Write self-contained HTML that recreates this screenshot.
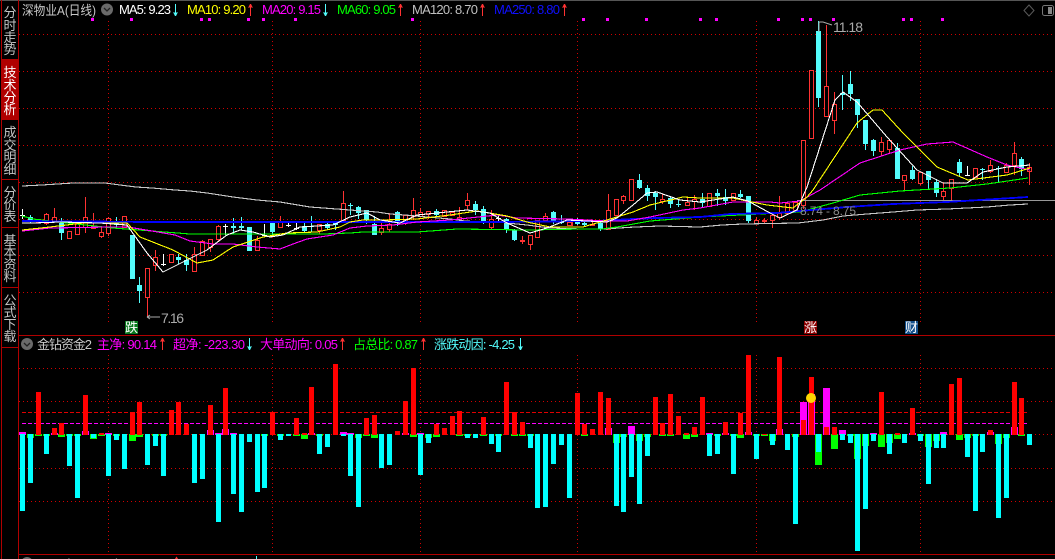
<!DOCTYPE html>
<html lang="zh">
<head>
<meta charset="utf-8">
<title>深物业A(日线)</title>
<style>
html,body{margin:0;padding:0;background:#000;width:1055px;height:559px;overflow:hidden}
svg{display:block}
text{font-family:"Liberation Sans","WenQuanYi Zen Hei","Noto Sans CJK SC",sans-serif;font-size:13px}
.s{font-size:13px;text-anchor:middle;fill:#c4c4c4}
.g{stroke:#d00000;stroke-width:1;stroke-dasharray:1 3;fill:none}
.l{fill:none;stroke-width:1.100;stroke-linejoin:round}
</style>
</head>
<body>
<svg width="1055" height="559" viewBox="0 0 1055 559" xmlns="http://www.w3.org/2000/svg">
<rect width="1055" height="559" fill="#000"/>
<rect width="1055" height="1" fill="#555"/>

<!-- grid -->
<g shape-rendering="crispEdges">
<path class="g" d="M19 34.5H1055M19 71.5H1055M19 108.5H1055M19 145.5H1055M19 182.5H1055M19 219.5H1055M19 255.5H1055M19 292.5H1055"/>
<path class="g" d="M108.5 21V322M272.500 21V322M420.500 21V322M577.500 21V322M756.500 21V322M920.500 21V322"/>
<path class="g" d="M19 368.500H1055M19 401.500H1055M19 434.500H1055M19 468.500H1055M19 501.500H1055"/>
<path class="g" d="M108.500 355V552M272.500 355V552M420.500 355V552M577.500 355V552M756.500 355V552M920.500 355V552"/>
<path fill="none" stroke="#e00000" stroke-dasharray="4 2" d="M22 412.500H1027"/>
<path fill="none" stroke="#f0f" stroke-dasharray="4 2" d="M22 423.500H1027"/>

<!-- frame -->
<path fill="none" stroke="#b00000" d="M1.500 0V559M18.500 0V559M2 59.500H18M2 179.500H18M2 227.500H18M2 287.500H18M2 347.500H18M18 335.500H1055M18 554.500H1055"/>
<rect x="2" y="60" width="16" height="60" fill="#b00000"/>

<!-- top signal squares -->
<path fill="#f0f" d="M91 18h3v3h-3zM130 18h3v3h-3zM200 18h3v3h-3zM208 18h3v3h-3zM247 18h3v3h-3zM262 18h3v3h-3zM294 18h3v3h-3zM411 18h3v3h-3zM582 18h3v3h-3zM606 18h3v3h-3zM645 18h3v3h-3zM699 18h3v3h-3zM715 18h3v3h-3zM777 18h3v3h-3zM801 18h3v3h-3zM809 18h3v3h-3zM832 18h3v3h-3zM902 18h3v3h-3zM910 18h3v3h-3zM941 18h3v3h-3z"/>

<!-- candle wicks -->
<path fill="none" stroke="#ff3232" d="M54.500 208V222M46.500 213V225M85.500 197V233M93.500 213V229M101.500 227V238M108.500 217V236M147.500 268V317M155.500 250V271M194.500 247V271M202.500 240V256M210.500 239V252M218.500 225V242M257.500 236V251M280.500 216V228M319.500 224V234M343.500 191V223M381.500 222V235M389.500 213V232M405.500 215V225M413.500 198V220M420.500 208V217M428.500 211V219M444.500 210V217M459.500 207V219M467.500 193V210M491.500 210V229M522.500 236V244M530.500 235V250M545.500 213V222M572.500 220V226M592.500 222V225M608.500 194V229M623.500 195V204M662.500 194V204M687.500 198V205M694.500 195V210M756.500 217V223M764.500 218V223M772.500 213V228M779.500 196V220M803.500 140V209M826.500 25V116M834.500 92V134M881.500 137V156M889.500 140V154M904.500 175V190M920.500 172V185M943.500 183V200M951.500 179V200M990.500 160V173M1006.500 163V173M1014.500 142V175M1029.500 163V185"/>
<path fill="none" stroke="#54fcfc" d="M30.500 215V223M61.500 218V240M116.500 217V227M139.500 277V303M178.500 254V264M186.500 254V271M233.500 218V234M241.500 217V230M272.500 223V236M304.500 221V232M311.500 216V232M327.500 222V230M335.500 222V230M350.500 203V215M358.500 206V219M366.500 210V224M374.500 216V235M397.500 211V226M436.500 209V217M475.500 201V215M483.500 206V224M506.500 218V233M514.500 229V241M553.500 211V224M561.500 215V224M577.500 218V225M584.500 221V226M600.500 221V231M639.500 174V189M647.500 185V201M655.500 191V210M670.500 196V208M678.500 200V207M702.500 193V207M717.500 189V206M725.500 189V205M740.500 190V198M748.500 196V223M818.500 21V107M842.500 75V110M850.500 71V101M857.500 99V128M865.500 120V150M873.500 139V156M897.500 143V179M912.500 166V180M928.500 171V189M936.500 179V197M959.500 159V176M982.500 168V180M998.500 166V182M1021.500 157V176"/>
<path fill="none" stroke="#fff" d="M22.500 209V219M20 215.500h5M163.500 254V266M161 264.500h5M225.500 224V235M223 226.500h5M264.500 224V236M262 235.500h5M288.500 222V227M286 225.500h5M296.500 223V230M294 228.500h5M498.500 215V221M496 218.500h5M967.500 166V176M965 175.500h5"/>

<!-- red hollow bodies -->
<path fill="#000" stroke="#ff3232" d="M36.500 219.500h4v3h-4zM44.500 214.500h4v9h-4zM52.500 217.500h4v4h-4zM67.500 231.500h4v7h-4zM75.500 223.500h4v11h-4zM83.500 217.500h4v10h-4zM91.500 226.500h4v2h-4zM99.500 232.500h4v4h-4zM106.500 218.500h4v15h-4zM122.500 216.500h4v11h-4zM145.500 268.500h4v29h-4zM153.500 257.500h4v8h-4zM169.500 254.500h4v8h-4zM192.500 254.500h4v17h-4zM200.500 241.500h4v14h-4zM208.500 239.500h4v8h-4zM216.500 226.500h4v13h-4zM255.500 240.500h4v10h-4zM278.500 222.500h4v5h-4zM317.500 224.500h4v6h-4zM341.500 203.500h4v17h-4zM379.500 228.500h4v4h-4zM387.500 224.500h4v5h-4zM403.500 215.500h4v6h-4zM411.500 210.500h4v6h-4zM418.500 212.500h4v4h-4zM426.500 211.500h4v3h-4zM442.500 210.500h4v6h-4zM450.500 212.500h4v3h-4zM457.500 217.500h4v2h-4zM465.500 200.500h4v5h-4zM489.500 219.500h4v8h-4zM520.500 240.500h4v1h-4zM528.500 235.500h4v9h-4zM535.500 220.500h4v17h-4zM543.500 216.500h4v4h-4zM567.500 222.500h4v3h-4zM590.500 224.500h4v1h-4zM606.500 210.500h4v19h-4zM614.500 199.500h4v16h-4zM621.500 196.500h4v4h-4zM629.500 179.500h4v21h-4zM660.500 199.500h4v2h-4zM685.500 202.500h4v3h-4zM692.500 199.500h4v2h-4zM707.500 193.500h4v13h-4zM731.500 193.500h4v7h-4zM754.500 220.500h4v3h-4zM762.500 220.500h4v1h-4zM770.500 215.500h4v5h-4zM777.500 213.500h4v4h-4zM785.500 203.500h4v10h-4zM793.500 202.500h4v8h-4zM801.500 140.500h4v65h-4zM809.500 70.500h4v68h-4zM824.500 86.500h4v30h-4zM832.500 104.500h4v16h-4zM879.500 142.500h4v9h-4zM887.500 140.500h4v9h-4zM902.500 175.500h4v5h-4zM918.500 172.500h4v11h-4zM941.500 191.500h4v5h-4zM949.500 179.500h4v9h-4zM973.500 168.500h4v9h-4zM988.500 165.500h4v6h-4zM1004.500 165.500h4v7h-4zM1012.500 153.500h4v12h-4zM1027.500 167.500h4v4h-4z"/>

<!-- cyan bodies -->
<path fill="#54fcfc" d="M28 217h5v4h-5zM59 223h5v10h-5zM114 222h5v3h-5zM130 235h5v44h-5zM137 285h5v6h-5zM176 257h5v3h-5zM184 260h5v5h-5zM231 226h5v2h-5zM239 226h5v2h-5zM247 227h5v24h-5zM270 223h5v9h-5zM302 226h5v5h-5zM309 226h5v1h-5zM325 224h5v4h-5zM333 223h5v2h-5zM348 205h5v1h-5zM356 207h5v6h-5zM364 210h5v10h-5zM372 224h5v11h-5zM395 212h5v9h-5zM434 211h5v4h-5zM473 204h5v6h-5zM481 209h5v13h-5zM504 219h5v10h-5zM512 230h5v10h-5zM551 212h5v9h-5zM559 222h5v1h-5zM575 221h5v3h-5zM582 223h5v2h-5zM598 223h5v6h-5zM637 180h5v8h-5zM645 188h5v8h-5zM653 193h5v4h-5zM668 198h5v6h-5zM676 204h5v1h-5zM700 199h5v4h-5zM715 193h5v3h-5zM723 197h5v4h-5zM738 194h5v3h-5zM746 196h5v25h-5zM816 31h5v67h-5zM840 93h5v2h-5zM848 84h5v10h-5zM855 99h5v16h-5zM863 120h5v24h-5zM871 140h5v11h-5zM895 148h5v31h-5zM910 170h5v9h-5zM926 171h5v9h-5zM934 182h5v11h-5zM957 162h5v11h-5zM980 169h5v1h-5zM996 168h5v1h-5zM1019 159h5v10h-5z"/>

<!-- cost line -->
<path stroke="#999" d="M797 200.500H1055"/>
</g>

<!-- moving averages -->
<g shape-rendering="crispEdges">
<polyline class="l" stroke="#c8c8c8" points="22,186 42,185 73,183 105,183 120,185 136,187 152,188 175,190 190,191 207,193 233,197 257,200 280,202 310,207 350,210 377,212 390,214 405,215 427,217 450,219 465,221 482,222 497,222 527,225 550,228 583,229 603,229 635,227 660,226 700,227 722,225 743,224 798,223 823,220 843,216 867,214 893,212 917,210 947,209 987,207 1010,205 1028,204"/>
<polyline class="l" stroke="#00ff00" points="22,216 33,219 67,223 113,228 152,231 190,234 227,234 270,234 323,234 350,233 363,232 417,232 457,229 527,230 583,229 602,229 617,227 650,221 700,217 720,216 780,213 800,212 833,203 860,195 900,191 950,188 987,184 1028,178"/>
<polyline class="l" stroke="#0000ff" style="stroke-width:1.800" points="22,221 152,222 350,222 500,222 597,221 633,219 657,218 700,217 730,214 777,213 800,211 847,207 893,204 947,202 980,200 1028,197"/>
<polyline class="l" stroke="#ff00ff" points="22,231 50,228 110,227 128,227 140,229 152,231 175,235 190,241 213,244 233,244 257,247 280,249 293,244 307,239 333,235 350,228 367,226 393,225 417,222 450,220 497,215 517,218 567,219 607,221 627,221 650,217 683,210 700,208 733,202 770,202 780,203 800,201 820,190 860,163 900,150 927,144 953,142 987,157 1007,165 1030,170"/>
<polyline class="l" stroke="#ffff00" points="22,230 50,227 83,223 127,223 140,237 173,250 197,263 213,260 233,247 263,237 287,233 317,232 340,227 350,222 363,220 383,220 417,219 450,215 477,211 507,216 527,222 550,227 583,227 607,220 633,212 650,205 683,197 700,198 733,198 747,201 767,205 793,208 807,197 813,190 857,123 873,110 882,110 903,133 937,167 968,180 1007,175 1030,168"/>
<polyline class="l" stroke="#ffffff" points="22,223 33,223 60,222 100,223 127,225 147,253 163,272 187,260 207,250 227,235 240,230 253,232 270,237 283,235 300,227 333,225 350,217 367,213 380,220 400,223 417,215 447,212 467,210 490,213 507,223 530,233 547,228 567,220 607,222 617,218 633,205 647,193 657,192 680,200 700,202 733,197 748,201 770,213 780,218 797,210 807,187 835,100 843,92 857,102 887,137 917,170 943,183 967,183 983,172 1007,167 1030,165"/>
</g>

<!-- lower indicator bars -->
<g shape-rendering="crispEdges">
<path fill="#00ff00" d="M27 434v4h7v-4zM35 434v2h7v-2zM43 434v2h7v-2zM58 434v3h7v-3zM66 434v2h7v-2zM74 434v2h7v-2zM90 434v5h7v-5zM98 434v2h7v-2zM113 434v2h7v-2zM129 434v7h7v-7zM136 434v3h7v-3zM152 434v2h7v-2zM160 434v2h7v-2zM261 434v2h7v-2zM277 434v2h7v-2zM293 434v2h7v-2zM301 434v5h7v-5zM316 434v2h7v-2zM355 434v4h7v-4zM363 434v2h7v-2zM371 434v4h7v-4zM410 434v3h7v-3zM425 434v4h7v-4zM433 434v3h7v-3zM456 434v2h7v-2zM464 434v2h7v-2zM480 434v2h7v-2zM495 434v2h7v-2zM511 434v2h7v-2zM519 434v2h7v-2zM527 434v2h7v-2zM581 434v2h7v-2zM613 434v9h7v-9zM620 434v3h7v-3zM636 434v7h7v-7zM644 434v3h7v-3zM659 434v2h7v-2zM667 434v2h7v-2zM683 434v5h7v-5zM691 434v3h7v-3zM714 434v2h7v-2zM730 434v2h7v-2zM737 434v4h7v-4zM753 434v2h7v-2zM761 434v2h7v-2zM769 434v7h7v-7zM792 434v3h7v-3zM815 434v31h7v-31zM831 434v15h7v-15zM847 434v2h7v-2zM854 434v25h7v-25zM862 434v12h7v-12zM878 434v13h7v-13zM886 434v9h7v-9zM894 434v5h7v-5zM917 434v2h7v-2zM925 434v13h7v-13zM933 434v7h7v-7zM956 434v6h7v-6zM964 434v4h7v-4zM972 434v2h7v-2zM995 434v10h7v-10zM1003 434v4h7v-4zM1018 434v2h7v-2z"/>
<path fill="#ff00ff" d="M19 435v-3h7v3zM51 435v-2h7v2zM82 435v-4h7v4zM105 435v-2h7v2zM207 435v-5h7v5zM215 435v-2h7v2zM222 435v-6h7v6zM230 435v-2h7v2zM308 435v-2h7v2zM340 435v-3h7v3zM347 435v-2h7v2zM402 435v-2h7v2zM417 435v-2h7v2zM605 435v-7h7v7zM628 435v-9h7v9zM706 435v-2h7v2zM722 435v-2h7v2zM745 435v-3h7v3zM776 435v-6h7v6zM800 435v-33h7v33zM808 435v-41h7v41zM823 435v-47h7v47zM839 435v-5h7v5zM870 435v-2h7v2zM909 435v-2h7v2zM940 435v-3h7v3zM987 435v-3h7v3zM1011 435v-8h7v8z"/>
<path fill="#ff0000" d="M36 435v-43h5v43zM52 435v-7h5v7zM59 435v-12h5v12zM83 435v-40h5v40zM99 435v-2h5v2zM130 435v-23h5v23zM137 435v-33h5v33zM169 435v-25h5v25zM176 435v-33h5v33zM184 435v-11h5v11zM208 435v-30h5v30zM223 435v-47h5v47zM270 435v-23h5v23zM294 435v-17h5v17zM302 435v-2h5v2zM309 435v-48h5v48zM333 435v-71h5v71zM364 435v-17h5v17zM372 435v-20h5v20zM395 435v-4h5v4zM403 435v-34h5v34zM411 435v-67h5v67zM434 435v-11h5v11zM442 435v-7h5v7zM450 435v-19h5v19zM457 435v-24h5v24zM481 435v-18h5v18zM504 435v-53h5v53zM512 435v-23h5v23zM520 435v-13h5v13zM575 435v-42h5v42zM582 435v-11h5v11zM590 435v-6h5v6zM598 435v-43h5v43zM606 435v-37h5v37zM653 435v-38h5v38zM660 435v-12h5v12zM668 435v-41h5v41zM676 435v-19h5v19zM684 435v-2h5v2zM692 435v-8h5v8zM700 435v-38h5v38zM723 435v-13h5v13zM738 435v-22h5v22zM746 435v-80h5v80zM762 435v-1h5v1zM777 435v-78h5v78zM801 435v-15h5v15zM809 435v-58h5v58zM824 435v-8h5v8zM832 435v-8h5v8zM879 435v-43h5v43zM895 435v-2h5v2zM910 435v-27h5v27zM949 435v-51h5v51zM957 435v-57h5v57zM988 435v-5h5v5zM1012 435v-53h5v53zM1019 435v-37h5v37z"/>
<path fill="#00ffff" d="M20 434v77h5v-77zM28 434v49h5v-49zM44 434v20h5v-20zM67 434v32h5v-32zM75 434v64h5v-64zM91 434v4h5v-4zM106 434v42h5v-42zM114 434v6h5v-6zM122 434v35h5v-35zM145 434v31h5v-31zM153 434v12h5v-12zM161 434v42h5v-42zM192 434v49h5v-49zM200 434v45h5v-45zM216 434v88h5v-88zM231 434v60h5v-60zM239 434v78h5v-78zM247 434v8h5v-8zM255 434v58h5v-58zM262 434v54h5v-54zM278 434v6h5v-6zM286 434v2h5v-2zM317 434v20h5v-20zM325 434v13h5v-13zM341 434v2h5v-2zM348 434v42h5v-42zM356 434v73h5v-73zM379 434v34h5v-34zM387 434v31h5v-31zM418 434v41h5v-41zM426 434v9h5v-9zM465 434v4h5v-4zM473 434v4h5v-4zM489 434v10h5v-10zM496 434v18h5v-18zM528 434v14h5v-14zM535 434v74h5v-74zM543 434v73h5v-73zM551 434v30h5v-30zM559 434v11h5v-11zM567 434v64h5v-64zM614 434v72h5v-72zM621 434v78h5v-78zM629 434v43h5v-43zM637 434v70h5v-70zM645 434v22h5v-22zM707 434v22h5v-22zM715 434v20h5v-20zM731 434v40h5v-40zM754 434v25h5v-25zM770 434v11h5v-11zM785 434v16h5v-16zM793 434v90h5v-90zM816 434v18h5v-18zM840 434v6h5v-6zM848 434v9h5v-9zM855 434v117h5v-117zM863 434v75h5v-75zM871 434v7h5v-7zM887 434v20h5v-20zM902 434v9h5v-9zM918 434v7h5v-7zM926 434v50h5v-50zM934 434v14h5v-14zM941 434v14h5v-14zM965 434v23h5v-23zM973 434v77h5v-77zM980 434v18h5v-18zM996 434v84h5v-84zM1004 434v64h5v-64zM1027 434v11h5v-11z"/>
</g>
<circle cx="811" cy="398" r="5" fill="#ffd700"/>

<!-- sidebar labels -->
<text class="s" x="10" y="17">分</text><text class="s" x="10" y="30">时</text><text class="s" x="10" y="42">走</text><text class="s" x="10" y="54">势</text>
<text class="s" x="10" y="77" style="fill:#fff">技</text><text class="s" x="10" y="90" style="fill:#fff">术</text><text class="s" x="10" y="102" style="fill:#fff">分</text><text class="s" x="10" y="114" style="fill:#fff">析</text>
<text class="s" x="10" y="137">成</text><text class="s" x="10" y="150">交</text><text class="s" x="10" y="162">明</text><text class="s" x="10" y="174">细</text>
<text class="s" x="10" y="197">分</text><text class="s" x="10" y="209">价</text><text class="s" x="10" y="221">表</text>
<text class="s" x="10" y="245">基</text><text class="s" x="10" y="257">本</text><text class="s" x="10" y="269">资</text><text class="s" x="10" y="281">料</text>
<text class="s" x="10" y="305">公</text><text class="s" x="10" y="317">式</text><text class="s" x="10" y="329">下</text><text class="s" x="10" y="341">载</text>

<!-- top legend -->
<text x="22" y="15" fill="#c8c8c8" textLength="74" lengthAdjust="spacingAndGlyphs">深物业A(日线)</text>
<circle cx="107" cy="9.500" r="6" fill="#6a6a6a"/>
<path d="M104 8l3 3 3-3" fill="none" stroke="#222" stroke-width="1.300"/>
<text x="119" y="14" fill="#fff" textLength="52">MA5: 9.23</text>
<text x="187" y="14" fill="#ff0" textLength="59">MA10: 9.20</text>
<text x="262" y="14" fill="#f0f" textLength="59">MA20: 9.15</text>
<text x="337" y="14" fill="#0f0" textLength="59">MA60: 9.05</text>
<text x="412" y="14" fill="#c0c0c0" textLength="66">MA120: 8.70</text>
<text x="494" y="14" fill="#1010ff" textLength="66">MA250: 8.80</text>
<g shape-rendering="crispEdges">
<path fill="none" stroke="#54fcfc" d="M175.500 4V15M325.500 4V15M249.500 338V350M520.500 338V350"/>
<path fill="#54fcfc" d="M173 12.500h5l-2.500 4zM323 12.500h5l-2.500 4zM247 346.500h5l-2.500 4zM518 346.500h5l-2.500 4z"/>
<path fill="none" stroke="#ff3232" d="M250.500 6V16M400.500 6V16M482.500 6V16M564.500 6V16M162.500 340V350M342.500 340V350M423.500 340V350"/>
<path fill="#ff3232" d="M250.500 3.500l2.500 4h-5zM400.500 3.500l2.500 4h-5zM482.500 3.500l2.500 4h-5zM564.500 3.500l2.500 4h-5zM162.500 337.500l2.500 4h-5zM342.500 337.500l2.500 4h-5zM423.500 337.500l2.500 4h-5z"/>
</g>

<!-- top right icons -->
<path d="M1029 5l5 5.500-5 5.500-5-5.500z" fill="none" stroke="#5a5a5a"/>
<rect x="1042.500" y="5.500" width="11" height="10" rx="2" fill="none" stroke="#777"/>
<rect x="1048" y="7" width="4" height="7" fill="#888"/>

<!-- price labels -->
<path d="M819 32V22H823L832 25" fill="none" stroke="#aaa"/>
<text x="833" y="32" fill="#aaa" style="font-size:14px" textLength="30">11.18</text>
<path d="M147 317H160M147 317l3-2M147 317l3 2" fill="none" stroke="#aaa"/>
<text x="161" y="323" fill="#aaa" style="font-size:14px" textLength="23">7.16</text>
<text x="800" y="215" fill="#8a8a8a" style="font-size:12px" textLength="56">8.74 - 8.75</text>

<!-- event markers -->
<rect x="125" y="321" width="13" height="13" fill="#0a7a1e"/>
<text x="125" y="332" fill="#fff" style="font-size:13px">跌</text>
<rect x="804" y="321" width="13" height="13" fill="#8c0000"/>
<text x="804" y="332" fill="#fff" style="font-size:13px">涨</text>
<rect x="905" y="321" width="13" height="13" fill="#14508c"/>
<text x="905" y="332" fill="#fff" style="font-size:13px">财</text>

<!-- lower legend -->
<circle cx="27" cy="344" r="6" fill="#6a6a6a"/>
<path d="M24 343l3 3 3-3" fill="none" stroke="#222" stroke-width="1.300"/>
<text x="37" y="349" fill="#c8c8c8" textLength="55">金钻资金2</text>
<text x="97" y="349" fill="#f0f" textLength="60">主净: 90.14</text>
<text x="173" y="349" fill="#f0f" textLength="72">超净: -223.30</text>
<text x="260" y="349" fill="#f0f" textLength="78">大单动向: 0.05</text>
<text x="353" y="349" fill="#0f0" textLength="65">占总比: 0.87</text>
<text x="434" y="349" fill="#54fcfc" textLength="81">涨跌动因: -4.25</text>

<!-- clipped bottom legend -->
<circle cx="27" cy="563" r="6" fill="#6a6a6a"/>
<text x="38" y="568" fill="#c8c8c8" textLength="82">DMA(10,50,10)</text>
<text x="124" y="568" fill="#fff" textLength="46">DIF: 0.88</text>
<text x="188" y="568" fill="#ff0" textLength="62">DIFMA: 0.88</text>
<path d="M176.500 556.500l2.500 4h-5z" fill="#ff3232"/>
<path d="M256.500 556V559" stroke="#54fcfc" fill="none"/>
</svg>
</body>
</html>
